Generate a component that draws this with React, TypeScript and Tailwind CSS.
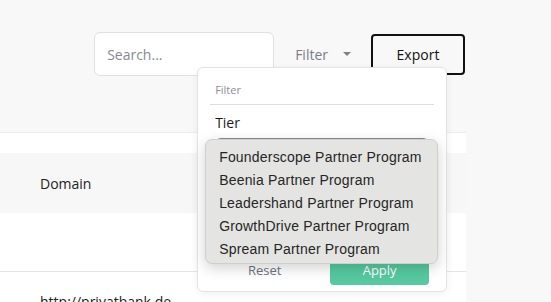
import React from "react";

const TIERS = [
  "Founderscope Partner Program",
  "Beenia Partner Program",
  "Leadershand Partner Program",
  "GrowthDrive Partner Program",
  "Spream Partner Program",
];

function FilterPanel() {
  return (
    <div className="absolute left-[-98px] top-[23px] z-20 h-[225px] w-[250px] rounded-[6px] border border-[#e3e3e3] bg-white px-3 pt-[14px] shadow-[0_2px_8px_rgba(0,0,0,0.06)]">
      {/* Header */}
      <div className="border-b border-[#dedede] pb-[6px]">
        <p className="pl-[5px] text-[11px] leading-4 text-[#8a8f99]">Filter</p>
      </div>

      {/* Tier select */}
      <div className="px-[5px] pt-[8px]">
        <p className="text-[14px] leading-5 text-[#1a1a1a]">Tier</p>
        <div className="mt-[5px] h-[36px] rounded-[6px] border border-[#8a8a8a] bg-white" />
      </div>

      {/* Actions */}
      <div className="mt-[83px] flex gap-4 px-[5px]">
        <button className="h-[28px] flex-1 text-[13px] text-[#6b7280]">Reset</button>
        <button className="h-[28px] flex-1 rounded-[4px] bg-[#56c9a0] text-[13px] text-white">Apply</button>
      </div>

      {/* Native select popup */}
      <div className="absolute left-[7px] top-[71px] h-[125px] w-[233px] rounded-[7px] border border-[#cfcfcd] bg-[#e4e4e2] pl-[13px] pt-[6px] shadow-[0_4px_14px_rgba(0,0,0,0.18)]">
        {TIERS.map(t => (
          <div
            key={t}
            className="text-[14px] leading-[23px] tracking-[0.2px] text-[#262626]"
            style={{ fontFamily: '"Liberation Sans", Arial, sans-serif' }}
          >
            {t}
          </div>
        ))}
      </div>
    </div>
  );
}

export default function App() {
  return (
    <div
      className="h-screen w-full overflow-hidden bg-[#f8f8f8]"
      style={{ fontFamily: '"Open Sans", "Noto Sans", sans-serif' }}
    >
      <div className="w-[466px]">
        {/* Toolbar */}
        <div className="flex items-center justify-end pt-8 pr-px">
          <input
            className="h-[44px] w-[180px] rounded-[6px] border border-[#e0e0e0] bg-white px-3 text-[14px] text-[#333] outline-none placeholder:text-[#858a92]"
            placeholder="Search..."
          />
          <div className="relative ml-[21px] mr-[20px] flex items-center">
            <button className="flex items-center text-[14px] text-[#7a8089]">
              Filter
              <span className="ml-[15px] h-0 w-0 border-x-[4px] border-t-[4px] border-x-transparent border-t-[#808080]" />
            </button>
            <FilterPanel />
          </div>
          <button className="h-[41px] w-[94px] rounded-[4px] border-2 border-[#111] text-[14px] text-[#111]">
            Export
          </button>
        </div>

        {/* Table card */}
        <div className="mt-[56px] border-t border-[#ececec] bg-white pt-5">
          <div className="flex h-[60px] items-center bg-[#f7f7f7] pl-10">
            <span className="text-[14px] text-[#222]">Domain</span>
          </div>
          <div className="h-[59px] border-b border-[#e4e4e4]" />
          <div className="pl-10 pt-[17px]">
            <span className="text-[14px] text-[#222]">http://privatbank.de</span>
          </div>
        </div>
      </div>
    </div>
  );
}
